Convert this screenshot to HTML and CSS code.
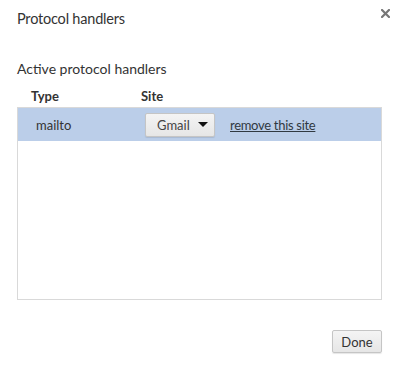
FILE: index.html
```html
<!DOCTYPE html>
<html lang="en">
<head>
    <meta charset="UTF-8">
    <title>Protocol handlers</title>
    <link rel="stylesheet" href="styles.css">
</head>
<body>
    <div class="dialog">
        <div class="title-bar">
            <h1>Protocol handlers</h1>
            <svg class="close" width="9" height="9" viewBox="0 0 9 9">
                <path d="M1 1 L8 8 M8 1 L1 8" stroke="#777" stroke-width="2.2" stroke-linecap="square"/>
            </svg>
        </div>

        <h2>Active protocol handlers</h2>
        <div class="list-head">
            <span class="col-type">Type</span>
            <span class="col-site">Site</span>
        </div>
        <div class="list">
            <div class="row selected">
                <span class="col-type">mailto</span>
                <span class="col-site">
                    <span class="select">Gmail <span class="arrow"></span></span>
                    <a href="#" class="remove">remove this site</a>
                </span>
            </div>
        </div>

        <div class="actions">
            <button>Done</button>
        </div>
    </div>
</body>
</html>
```

FILE: styles.css
```css
body {
    margin: 0;
    background: #fff;
    font-family: 'Lato', 'Noto Sans', sans-serif;
    font-size: 13px;
    line-height: 18px;
    color: #333;
}

.dialog {
    width: 399px;
    height: 369px;
    box-sizing: border-box;
    padding: 0 17px;
}

.title-bar {
    display: flex;
    justify-content: space-between;
    align-items: flex-start;
    height: 43px;
}

h1 {
    margin: 0;
    padding-top: 9px;
    font-size: 14.5px;
    line-height: 20px;
    font-weight: normal;
    letter-spacing: -0.2px;
    color: #333;
}

.close {
    margin-top: 9px;
    margin-right: -8px;
}

h2 {
    margin: 16px 0 0;
    font-size: 14px;
    font-weight: normal;
    line-height: 20px;
}

.list-head {
    display: flex;
    font-weight: bold;
    padding-left: 14px;
    margin-top: 8px;
    height: 20px;
}

.col-type {
    width: 110px;
}

.list {
    border: 1px solid #d9d9d9;
    height: 191px;
}

.row {
    display: flex;
    align-items: center;
    height: 33px;
    padding-left: 18px;
}

.row.selected {
    background: #bbcee9;
}

.row .col-site {
    display: flex;
    align-items: center;
    margin-left: -1px;
}

.select {
    display: inline-flex;
    align-items: center;
    justify-content: space-between;
    box-sizing: border-box;
    width: 70px;
    height: 24px;
    padding: 0 6px 0 11px;
    border: 1px solid #c5c5c5;
    border-radius: 2px;
    background: linear-gradient(#f4f4f4, #e6e6e6);
    box-shadow: 0 1px 1px rgba(0, 0, 0, 0.1);
    color: #444;
}

.arrow {
    width: 0;
    height: 0;
    border-left: 5px solid transparent;
    border-right: 5px solid transparent;
    border-top: 5px solid #111;
}

.remove {
    margin-left: 15px;
    color: #303942;
    letter-spacing: -0.3px;
    text-decoration: underline;
}

.actions {
    display: flex;
    justify-content: flex-end;
    margin-top: 30px;
}

button {
    width: 50px;
    height: 23px;
    padding: 0;
    border: 1px solid #c5c5c5;
    border-radius: 2px;
    background: linear-gradient(#f4f4f4, #e6e6e6);
    box-shadow: 0 1px 1px rgba(0, 0, 0, 0.1);
    font-family: inherit;
    font-size: 13px;
    color: #333;
}
```
